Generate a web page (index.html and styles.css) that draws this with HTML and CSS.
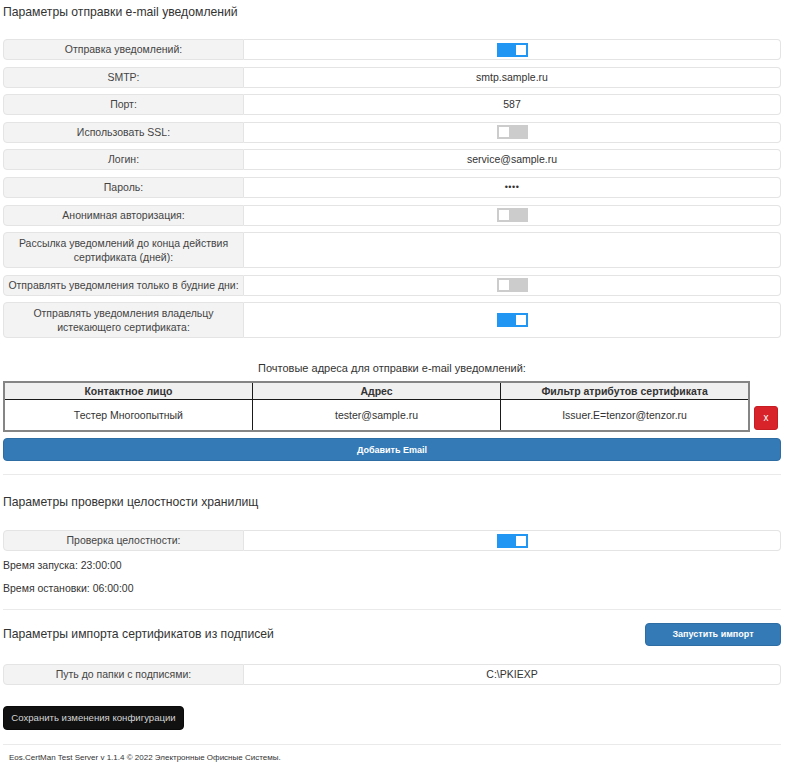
FILE: index.html
```html
<!DOCTYPE html>
<html lang="ru">
<head>
<meta charset="utf-8">
<title>Параметры</title>
<link rel="stylesheet" href="styles.css">
</head>
<body>
<div class="page">
  <h2 class="section-title first">Параметры отправки e-mail уведомлений</h2>

  <div class="field"><div class="label">Отправка уведомлений:</div><div class="value"><span class="toggle on"></span></div></div>
  <div class="field"><div class="label">SMTP:</div><div class="value">smtp.sample.ru</div></div>
  <div class="field"><div class="label">Порт:</div><div class="value">587</div></div>
  <div class="field"><div class="label">Использовать SSL:</div><div class="value"><span class="toggle"></span></div></div>
  <div class="field"><div class="label">Логин:</div><div class="value">service@sample.ru</div></div>
  <div class="field"><div class="label">Пароль:</div><div class="value dots">••••</div></div>
  <div class="field"><div class="label">Анонимная авторизация:</div><div class="value"><span class="toggle"></span></div></div>
  <div class="field tall"><div class="label">Рассылка уведомлений до конца действия сертификата (дней):</div><div class="value"></div></div>
  <div class="field"><div class="label">Отправлять уведомления только в будние дни:</div><div class="value"><span class="toggle"></span></div></div>
  <div class="field tall"><div class="label">Отправлять уведомления владельцу истекающего сертификата:</div><div class="value"><span class="toggle on"></span></div></div>

  <div class="caption">Почтовые адреса для отправки e-mail уведомлений:</div>

  <div class="mail-block">
    <table class="mail-table">
      <thead>
        <tr><th>Контактное лицо</th><th>Адрес</th><th>Фильтр атрибутов сертификата</th></tr>
      </thead>
      <tbody>
        <tr><td>Тестер Многоопытный</td><td>tester@sample.ru</td><td>Issuer.E=tenzor@tenzor.ru</td></tr>
      </tbody>
    </table>
    <div class="remove-cell"><button class="btn-remove" type="button">x</button></div>
  </div>

  <button class="btn btn-primary btn-wide" type="button">Добавить Email</button>

  <hr class="divider first-divider">

  <h2 class="section-title second">Параметры проверки целостности хранилищ</h2>
  <div class="field"><div class="label">Проверка целостности:</div><div class="value"><span class="toggle on"></span></div></div>
  <p class="info start">Время запуска: 23:00:00</p>
  <p class="info stop">Время остановки: 06:00:00</p>

  <hr class="divider second-divider">

  <div class="import-head">
    <h2 class="section-title inline">Параметры импорта сертификатов из подписей</h2>
    <button class="btn btn-primary btn-import" type="button">Запустить импорт</button>
  </div>
  <div class="field path-field"><div class="label">Путь до папки с подписями:</div><div class="value">C:\PKIEXP</div></div>

  <button class="btn btn-dark" type="button">Сохранить изменения конфигурации</button>

  <hr class="divider footer-divider">
  <footer class="footer">Eos.CertMan Test Server v 1.1.4 © 2022 Электронные Офисные Системы.</footer>
</div>
</body>
</html>
```

FILE: styles.css
```css
html, body {
  margin: 0;
  padding: 0;
  background: #fff;
}

.page {
  padding: 0 19px 0 3px;
  font-family: "Liberation Sans", Arial, sans-serif;
  color: #333;
  font-size: 10.5px;
}

.section-title {
  font-size: 12.2px;
  font-weight: normal;
  line-height: 16px;
  margin: 0;
  color: #333;
}
.section-title.first { margin: 4px 0 19px; }
.section-title.second { margin: 19px 0 20px; }
.section-title.inline { flex: 1; }

.field {
  display: flex;
  margin-bottom: 6.6px;
  line-height: 13px;
}
.field.tall { line-height: 14px; }

.label {
  width: 237px;
  flex: none;
  padding: 3px 1px;
  background: #f3f3f3;
  border: 1px solid #e4e4e4;
  border-radius: 4px 0 0 4px;
  text-align: center;
  color: #444;
  display: flex;
  align-items: center;
  justify-content: center;
}

.value {
  flex: 1;
  padding: 3px 4px;
  border: 1px solid #e4e4e4;
  border-left: none;
  border-radius: 0 4px 4px 0;
  text-align: center;
  color: #333;
  display: flex;
  align-items: center;
  justify-content: center;
}
.value.dots { font-size: 9px; letter-spacing: 0.5px; }

.toggle {
  display: block;
  width: 31px;
  height: 14px;
  margin: -1px 0;
  background: #ccc;
  position: relative;
}
.toggle::after {
  content: "";
  position: absolute;
  left: 2px;
  top: 2px;
  width: 10px;
  height: 10px;
  background: #fff;
}
.toggle.on { background: #2196f3; }
.toggle.on::after { left: auto; right: 2px; }

.caption {
  margin-top: 23px;
  text-align: center;
  line-height: 14px;
  font-size: 11px;
  color: #333;
}

.mail-block {
  display: flex;
  margin-top: 6px;
  align-items: stretch;
}

.mail-table {
  width: 747px;
  border-collapse: collapse;
  border: 2px solid #858585;
  table-layout: fixed;
  font-size: 10.5px;
}
.mail-table th,
.mail-table td {
  border: 1px solid #1a1a1a;
  text-align: center;
  padding: 0 4px;
}
.mail-table th {
  background: #f0f0f0;
  font-weight: bold;
  color: #333;
  height: 16px;
}
.mail-table td {
  height: 30px;
  color: #333;
}

.remove-cell {
  flex: 1;
  display: flex;
  align-items: flex-end;
  padding: 0 0 2px 4px;
}
.btn-remove {
  width: 24px;
  height: 24px;
  border: 1px solid #c61d23;
  border-radius: 3px;
  background: #d9232a;
  color: #fff;
  font-family: "Liberation Sans", Arial, sans-serif;
  font-size: 10px;
  padding: 0;
  line-height: 20px;
}

.btn {
  display: block;
  font-family: "Liberation Sans", Arial, sans-serif;
  border-radius: 4px;
  cursor: pointer;
  white-space: nowrap;
}
.btn-primary {
  background: #337ab7;
  border: 1px solid #2e6da4;
  color: #fff;
  font-weight: bold;
  font-size: 9px;
}
.btn-wide {
  width: 100%;
  height: 23px;
  margin-top: 6px;
  padding: 0;
}
.btn-import {
  width: 136px;
  height: 23px;
  padding: 0;
}
.btn-dark {
  margin-top: 21px;
  background: #111;
  border: 1px solid #0a0a0a;
  color: #d4d4d4;
  font-size: 9.6px;
  height: 24px;
  width: 181px;
  padding: 0;
}

.divider {
  border: none;
  border-top: 1px solid #eaeaea;
  margin: 0;
}
.first-divider { margin-top: 13px; }
.second-divider { margin-top: 14px; }
.footer-divider { margin-top: 14px; }

.info {
  margin: 0;
  line-height: 14px;
  font-size: 10.5px;
  color: #333;
}
.info.start { margin-top: 1px; }
.info.stop { margin-top: 9px; }

.import-head {
  display: flex;
  align-items: center;
  margin-top: 13px;
}

.path-field { margin-top: 18px; }

.footer {
  margin-top: 8px;
  padding-left: 6px;
  font-size: 8px;
  line-height: 10px;
  color: #333;
}
```
